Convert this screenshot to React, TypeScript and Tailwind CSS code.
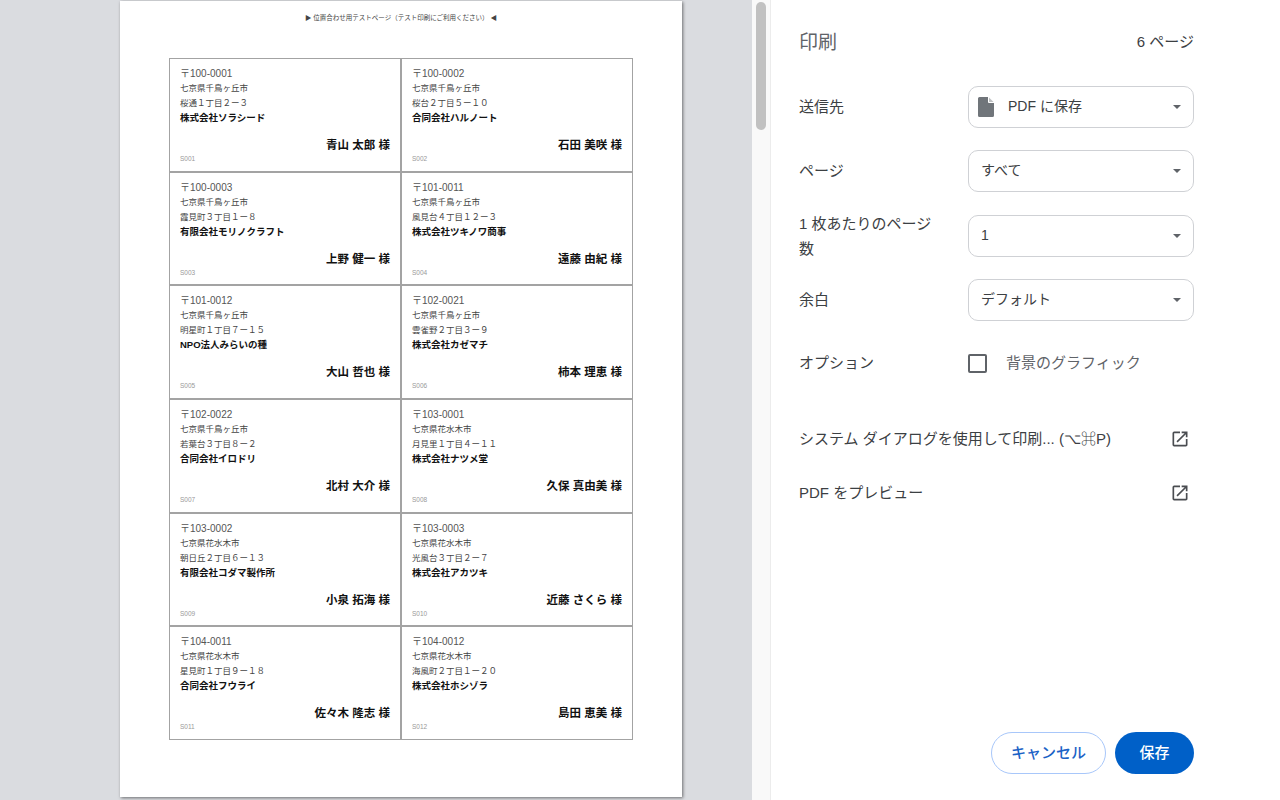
const CHIDORI = '七京県千鳥ヶ丘市';
const HANAMIZUKI = '七京県花水木市';

const LABELS = [
  { code: 'S001', zip: '〒100-0001', city: CHIDORI, street: '桜通１丁目２ー３', company: '株式会社ソラシード', name: '青山 太郎 様' },
  { code: 'S002', zip: '〒100-0002', city: CHIDORI, street: '桜台２丁目５ー１０', company: '合同会社ハルノート', name: '石田 美咲 様' },
  { code: 'S003', zip: '〒100-0003', city: CHIDORI, street: '霞見町３丁目１ー８', company: '有限会社モリノクラフト', name: '上野 健一 様' },
  { code: 'S004', zip: '〒101-0011', city: CHIDORI, street: '風見台４丁目１２ー３', company: '株式会社ツキノワ商事', name: '遠藤 由紀 様' },
  { code: 'S005', zip: '〒101-0012', city: CHIDORI, street: '明星町１丁目７ー１５', company: 'NPO法人みらいの種', name: '大山 哲也 様' },
  { code: 'S006', zip: '〒102-0021', city: CHIDORI, street: '雲雀野２丁目３ー９', company: '株式会社カゼマチ', name: '柿本 理恵 様' },
  { code: 'S007', zip: '〒102-0022', city: CHIDORI, street: '若葉台３丁目８ー２', company: '合同会社イロドリ', name: '北村 大介 様' },
  { code: 'S008', zip: '〒103-0001', city: HANAMIZUKI, street: '月見里１丁目４ー１１', company: '株式会社ナツメ堂', name: '久保 真由美 様' },
  { code: 'S009', zip: '〒103-0002', city: HANAMIZUKI, street: '朝日丘２丁目６ー１３', company: '有限会社コダマ製作所', name: '小泉 拓海 様' },
  { code: 'S010', zip: '〒103-0003', city: HANAMIZUKI, street: '光風台３丁目２ー７', company: '株式会社アカツキ', name: '近藤 さくら 様' },
  { code: 'S011', zip: '〒104-0011', city: HANAMIZUKI, street: '星見町１丁目９ー１８', company: '合同会社フウライ', name: '佐々木 隆志 様' },
  { code: 'S012', zip: '〒104-0012', city: HANAMIZUKI, street: '海風町２丁目１ー２０', company: '株式会社ホシゾラ', name: '島田 恵美 様' },
];

type Label = (typeof LABELS)[number];

function LabelCell({ label }: { label: Label }) {
  return (
    <div className="flex flex-col border border-[#a3a3a3] px-[10px] pt-[7px]">
      <p className="h-[15px] text-[10px] leading-[15px] text-[#555]">{label.zip}</p>
      <p className="h-[15px] text-[8.5px] leading-[15px] text-[#444]">{label.city}</p>
      <p className="h-[15px] text-[8.5px] leading-[15px] text-[#444]">{label.street}</p>
      <p className="mt-[-1px] h-[15px] text-[9.5px] font-bold leading-[15px] text-[#111]">{label.company}</p>
      <p className="mt-[13px] h-[15px] text-right text-[11.5px] font-bold leading-[15px] text-[#111]">{label.name}</p>
      <p className="h-[12px] text-[6.5px] leading-[12px] text-[#999]">{label.code}</p>
    </div>
  );
}

function Caret() {
  return (
    <svg width="8" height="4" viewBox="0 0 8 4" className="ml-auto shrink-0">
      <path d="M0 0h8L4 4z" fill="#5f6368" />
    </svg>
  );
}

function Select({ value, withIcon }: { value: string; withIcon?: boolean }) {
  return (
    <div className="flex h-[42px] w-[226px] items-center rounded-[10px] border border-[#cfd1d5] px-[12px]">
      {withIcon && (
        <svg width="16" height="20" viewBox="0 0 16 20" className="ml-[-3px] mr-[14px] shrink-0">
          <path d="M1.5 0H10v5a1 1 0 0 0 1 1h5v12.5a1.5 1.5 0 0 1-1.5 1.5h-13A1.5 1.5 0 0 1 0 18.5v-17A1.5 1.5 0 0 1 1.5 0z" fill="#70757a" />
          <path d="M11 0.4L15.6 5H11z" fill="#70757a" opacity="0.45" />
        </svg>
      )}
      <span className="pb-[2px] text-[14px] text-[#3c4043]">{value}</span>
      <Caret />
    </div>
  );
}

function OpenInNew() {
  return (
    <svg width="20" height="20" viewBox="0 0 24 24" fill="#4a4d51">
      <path d="M19 19H5V5h7V3H5a2 2 0 0 0-2 2v14a2 2 0 0 0 2 2h14c1.1 0 2-.9 2-2v-7h-2v7zM14 3v2h3.59l-9.83 9.83 1.41 1.41L19 6.41V10h2V3h-7z" />
    </svg>
  );
}

function LinkRow({ text }: { text: string }) {
  return (
    <div className="flex h-[20px] items-center justify-between pr-[4px]">
      <span className="text-[15px] text-[#3c4043]">{text}</span>
      <OpenInNew />
    </div>
  );
}

export default function App() {
  return (
    <div className="flex h-[800px] w-[1280px] overflow-hidden bg-white font-['Liberation_Sans','Noto_Sans_CJK_JP',sans-serif]">
      {/* preview */}
      <div className="w-[752px] shrink-0 bg-[#dadce0] pl-[120px] pt-px">
        <div className="flex h-[796px] w-[562px] flex-col items-center bg-white pt-[12px] shadow-[1px_1px_3px_rgba(0,0,0,0.5)]">
          <p className="h-[10px] text-[6.5px] leading-[10px] text-[#444]">▶ 位置合わせ用テストページ（テスト印刷にご利用ください） ◀</p>
          <div className="mt-[35px] grid h-[682px] w-[464px] grid-cols-2 grid-rows-6">
            {LABELS.map((label) => (
              <LabelCell key={label.code} label={label} />
            ))}
          </div>
        </div>
      </div>

      {/* scrollbar */}
      <div className="w-[18px] shrink-0 bg-[#f9f9f9] pl-[4px] pt-[2px]">
        <div className="h-[128px] w-[10px] rounded-[5px] bg-[#c1c1c1]" />
      </div>

      {/* settings */}
      <div className="flex flex-1 flex-col border-l border-[#ececec] pb-[26px] pl-[28px] pr-[86px] pt-[29px]">
        <div className="flex h-[26px] items-center justify-between">
          <h1 className="pt-[2px] text-[19px] text-[#5f6368]">印刷</h1>
          <span className="text-[15px] text-[#3c4043]">6 ページ</span>
        </div>

        <div className="mt-[31px] flex flex-col gap-[22px]">
          <div className="flex items-center">
            <span className="w-[169px] text-[15px] text-[#3c4043]">送信先</span>
            <Select value="PDF に保存" withIcon />
          </div>
          <div className="flex items-center">
            <span className="w-[169px] text-[15px] text-[#3c4043]">ページ</span>
            <Select value="すべて" />
          </div>
          <div className="mb-[-4px] mt-[-3px] flex items-center">
            <span className="w-[169px] pr-[28px] text-[15px] leading-[25px] text-[#3c4043]">1 枚あたりのページ数</span>
            <Select value="1" />
          </div>
          <div className="flex items-center">
            <span className="w-[169px] text-[15px] text-[#3c4043]">余白</span>
            <Select value="デフォルト" />
          </div>
        </div>

        <div className="mt-[32px] flex h-[20px] items-center">
          <span className="w-[169px] text-[15px] text-[#3c4043]">オプション</span>
          <span className="box-border h-[19px] w-[19px] rounded-[2px] border-2 border-[#5f6368]" />
          <span className="ml-[19px] text-[15px] text-[#5f6368]">背景のグラフィック</span>
        </div>

        <div className="mt-[56px] flex flex-col gap-[34px]">
          <LinkRow text="システム ダイアログを使用して印刷... (⌥⌘P)" />
          <LinkRow text="PDF をプレビュー" />
        </div>

        <div className="mt-auto flex justify-end gap-[9px]">
          <button className="h-[42px] w-[115px] rounded-full border border-[#a8c7fa] text-[15px] font-medium text-[#1a62c6]">キャンセル</button>
          <button className="h-[42px] w-[79px] rounded-full bg-[#0060c8] text-[15px] font-medium text-white">保存</button>
        </div>
      </div>
    </div>
  );
}
